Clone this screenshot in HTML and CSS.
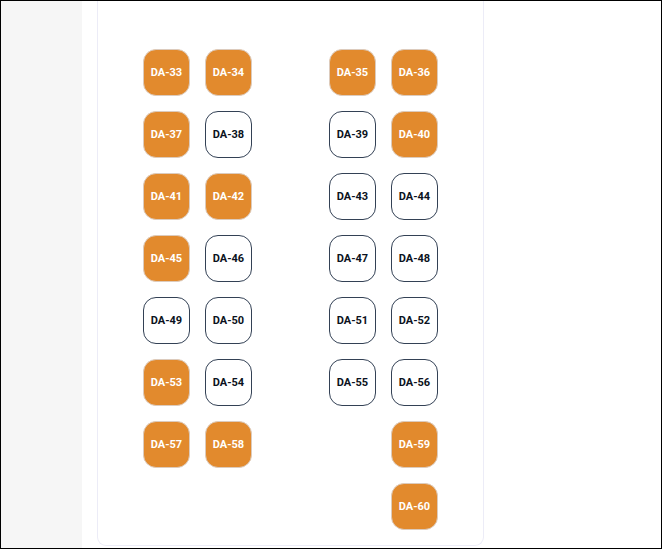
FILE: index.html
```html
<!DOCTYPE html>
<html>
<head>
  <title>Seat Map</title>
  <link rel="stylesheet" href="styles.css">
</head>
<body>
  <aside class="sidebar"></aside>

  <main class="content">
    <div class="card">
      <div class="seat-grid">
        <div class="seat taken">DA-33</div>
        <div class="seat taken">DA-34</div>
        <div class="aisle"></div>
        <div class="seat taken">DA-35</div>
        <div class="seat taken">DA-36</div>

        <div class="seat taken">DA-37</div>
        <div class="seat">DA-38</div>
        <div class="aisle"></div>
        <div class="seat">DA-39</div>
        <div class="seat taken">DA-40</div>

        <div class="seat taken">DA-41</div>
        <div class="seat taken">DA-42</div>
        <div class="aisle"></div>
        <div class="seat">DA-43</div>
        <div class="seat">DA-44</div>

        <div class="seat taken">DA-45</div>
        <div class="seat">DA-46</div>
        <div class="aisle"></div>
        <div class="seat">DA-47</div>
        <div class="seat">DA-48</div>

        <div class="seat">DA-49</div>
        <div class="seat">DA-50</div>
        <div class="aisle"></div>
        <div class="seat">DA-51</div>
        <div class="seat">DA-52</div>

        <div class="seat taken">DA-53</div>
        <div class="seat">DA-54</div>
        <div class="aisle"></div>
        <div class="seat">DA-55</div>
        <div class="seat">DA-56</div>

        <div class="seat taken">DA-57</div>
        <div class="seat taken">DA-58</div>
        <div class="aisle"></div>
        <div class="aisle"></div>
        <div class="seat taken">DA-59</div>

        <div class="aisle"></div>
        <div class="aisle"></div>
        <div class="aisle"></div>
        <div class="aisle"></div>
        <div class="seat taken">DA-60</div>
      </div>
    </div>
  </main>
</body>
</html>
```

FILE: styles.css
```css
html {
  height: 100%;
}
body {
  font-family: Roboto, 'Liberation Sans', Arial, sans-serif;
  margin: 0;
  height: 100%;
  box-sizing: border-box;
  border: 1px solid #000;
  background: #fff;
  display: flex;
  overflow: hidden;
}
.sidebar {
  width: 81px;
  flex-shrink: 0;
  background: #f6f6f6;
}
.content {
  flex: 1;
  padding-left: 15px;
  display: flex;
  flex-direction: column;
  justify-content: flex-end;
}
.card {
  width: 387px;
  box-sizing: border-box;
  background: #fff;
  border: 1px solid #ececf7;
  border-top: none;
  border-radius: 0 0 9px 9px;
  padding: 48px 0 15px 45px;
  margin-bottom: 2px;
}
.seat-grid {
  display: grid;
  grid-template-columns: repeat(5, 47px);
  grid-auto-rows: 47px;
  gap: 15px;
}
.seat {
  box-sizing: border-box;
  border: 1px solid #334155;
  border-radius: 13px;
  background: #fff;
  color: #0b1220;
  font-size: 11px;
  font-weight: 700;
  display: flex;
  align-items: center;
  justify-content: center;
}
.seat.taken {
  background: #e28a2d;
  border-color: #dccbbd;
  color: #fff;
}
```
